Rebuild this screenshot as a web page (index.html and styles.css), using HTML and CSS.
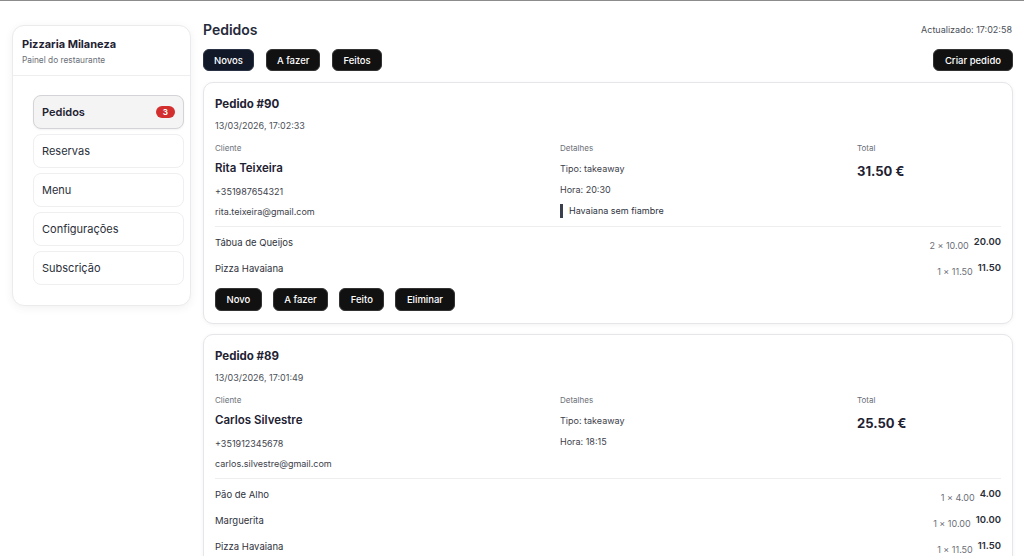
FILE: index.html
```html
<!DOCTYPE html>
<html lang="pt">
<head>
<meta charset="utf-8">
<title>Pedidos</title>
<link rel="stylesheet" href="styles.css">
</head>
<body>
<div class="app">
  <aside class="sidebar">
    <div class="brand">
      <div class="brand-name">Pizzaria Milaneza</div>
      <div class="brand-sub">Painel do restaurante</div>
    </div>
    <nav class="nav">
      <a class="nav-item active">Pedidos <span class="badge">3</span></a>
      <a class="nav-item">Reservas</a>
      <a class="nav-item">Menu</a>
      <a class="nav-item">Configurações</a>
      <a class="nav-item">Subscrição</a>
    </nav>
  </aside>
  <main class="main">
    <div class="topbar">
      <h1 class="page-title">Pedidos</h1>
      <div class="updated">Actualizado: 17:02:58</div>
    </div>
    <div class="toolbar">
      <div class="filters">
        <button class="btn btn-navy">Novos</button>
        <button class="btn">A fazer</button>
        <button class="btn">Feitos</button>
      </div>
      <button class="btn btn-create">Criar pedido</button>
    </div>

    <section class="order">
      <div class="order-title">Pedido #90</div>
      <div class="order-date">13/03/2026, 17:02:33</div>
      <div class="order-grid">
        <div class="col">
          <div class="label">Cliente</div>
          <div class="client-name">Rita Teixeira</div>
          <div class="line">+351987654321</div>
          <div class="line">rita.teixeira@gmail.com</div>
        </div>
        <div class="col">
          <div class="label">Detalhes</div>
          <div class="detail">Tipo: takeaway</div>
          <div class="detail">Hora: 20:30</div>
          <div class="note">Havaiana sem fiambre</div>
        </div>
        <div class="col">
          <div class="label">Total</div>
          <div class="total">31.50 €</div>
        </div>
      </div>
      <div class="items">
        <div class="item"><span class="item-name">Tábua de Queijos</span><span class="item-price"><span class="qty">2 × 10.00</span><span class="sum">20.00</span></span></div>
        <div class="item"><span class="item-name">Pizza Havaiana</span><span class="item-price"><span class="qty">1 × 11.50</span><span class="sum">11.50</span></span></div>
      </div>
      <div class="actions">
        <button class="btn btn-sm">Novo</button>
        <button class="btn btn-sm">A fazer</button>
        <button class="btn btn-sm">Feito</button>
        <button class="btn btn-sm">Eliminar</button>
      </div>
    </section>

    <section class="order">
      <div class="order-title">Pedido #89</div>
      <div class="order-date">13/03/2026, 17:01:49</div>
      <div class="order-grid">
        <div class="col">
          <div class="label">Cliente</div>
          <div class="client-name">Carlos Silvestre</div>
          <div class="line">+351912345678</div>
          <div class="line">carlos.silvestre@gmail.com</div>
        </div>
        <div class="col">
          <div class="label">Detalhes</div>
          <div class="detail">Tipo: takeaway</div>
          <div class="detail">Hora: 18:15</div>
        </div>
        <div class="col">
          <div class="label">Total</div>
          <div class="total">25.50 €</div>
        </div>
      </div>
      <div class="items">
        <div class="item"><span class="item-name">Pão de Alho</span><span class="item-price"><span class="qty">1 × 4.00</span><span class="sum">4.00</span></span></div>
        <div class="item"><span class="item-name">Marguerita</span><span class="item-price"><span class="qty">1 × 10.00</span><span class="sum">10.00</span></span></div>
        <div class="item"><span class="item-name">Pizza Havaiana</span><span class="item-price"><span class="qty">1 × 11.50</span><span class="sum">11.50</span></span></div>
      </div>
      <div class="actions">
        <button class="btn btn-sm">Novo</button>
        <button class="btn btn-sm">A fazer</button>
        <button class="btn btn-sm">Feito</button>
        <button class="btn btn-sm">Eliminar</button>
      </div>
    </section>
  </main>
</div>
</body>
</html>
```

FILE: styles.css
```css
* { box-sizing: border-box; }
html, body { margin: 0; padding: 0; }
body {
  font-family: Inter, "Liberation Sans", sans-serif;
  color: #1f2333;
  background: #fff;
  border-top: 1px solid #8c8c8c;
}
.app {
  display: flex;
  align-items: flex-start;
  gap: 12px;
  padding: 13px 11px 24px 12px;
}
.sidebar {
  width: 179px;
  flex: none;
  margin-top: 11px;
  border: 1px solid #ebebed;
  border-radius: 12px;
  background: #fff;
  box-shadow: 0 2px 10px rgba(0,0,0,0.06);
  padding-bottom: 20px;
}
.brand {
  padding: 10px 9px 9px;
  border-bottom: 1px solid #eeeef0;
}
.brand-name {
  font-size: 11px;
  font-weight: 700;
  line-height: 16px;
  color: #1e2232;
}
.brand-sub {
  font-size: 8.3px;
  line-height: 12px;
  margin-top: 2px;
  color: #6b6f78;
}
.nav {
  display: flex;
  flex-direction: column;
  gap: 5px;
  padding: 19px 6px 0 20px;
}
.nav-item {
  display: flex;
  align-items: center;
  justify-content: space-between;
  height: 34px;
  padding: 0 8px;
  border: 1px solid #efeff1;
  border-radius: 8px;
  font-size: 11px;
  color: #2b2f3a;
}
.nav-item.active {
  background: #f4f4f5;
  border-color: #d4d4d8;
  font-weight: 600;
  color: #1e2232;
  box-shadow: 0 1px 2px rgba(0,0,0,0.05);
}
.badge {
  background: #d32f2f;
  color: #fff;
  font-size: 8px;
  font-weight: 700;
  line-height: 12px;
  padding: 0 7px;
  border-radius: 6px;
}
.main {
  flex: 1;
  min-width: 0;
}
.topbar {
  display: flex;
  align-items: center;
  justify-content: space-between;
  height: 30px;
}
.page-title {
  margin: 0;
  font-size: 14px;
  font-weight: 600;
  color: #262b3b;
}
.updated {
  font-size: 9px;
  color: #4b4f58;
  padding-right: 1px;
}
.toolbar {
  display: flex;
  justify-content: space-between;
  align-items: center;
  margin-top: 5px;
}
.filters { display: flex; gap: 12px; }
.btn {
  font-family: inherit;
  background: #111;
  color: #fff;
  border: 1px solid #333;
  border-radius: 6px;
  height: 22px;
  padding: 0 10px;
  font-size: 9.5px;
  font-weight: 500;
  cursor: pointer;
}
.btn-navy {
  background: #111827;
  border-color: #2a3346;
}
.btn-create { padding: 0 11px; }
.order {
  margin-top: 11px;
  border: 1px solid #e6e6ea;
  border-radius: 10px;
  background: #fff;
  box-shadow: 0 1px 4px rgba(0,0,0,0.05);
  padding: 13px 11px 12px 11px;
}
.order + .order { margin-top: 10px; }
.order-title {
  font-size: 11.5px;
  font-weight: 700;
  line-height: 16px;
  color: #1e2232;
}
.order-date {
  margin-top: 8px;
  font-size: 9px;
  line-height: 12px;
  color: #4b4f58;
}
.order-grid {
  display: grid;
  grid-template-columns: 345fr 297fr 144fr;
  margin-top: 11px;
  padding-bottom: 8px;
  border-bottom: 1px solid #eeeef0;
}
.label {
  font-size: 8px;
  line-height: 11px;
  color: #6b6f78;
}
.client-name {
  margin-top: 6px;
  font-size: 11.5px;
  font-weight: 600;
  line-height: 16px;
  color: #1e2232;
}
.line {
  margin-top: 8px;
  font-size: 9px;
  line-height: 12px;
  color: #3d414b;
}
.client-name + .line { margin-top: 10px; }
.detail {
  margin-top: 9px;
  font-size: 9px;
  line-height: 12px;
  color: #3d414b;
}
.note {
  margin-top: 8px;
  border-left: 3px solid #3a3f4d;
  padding-left: 6px;
  font-size: 9px;
  line-height: 14px;
  color: #2f333d;
}
.total {
  margin-top: 9px;
  font-size: 13px;
  font-weight: 700;
  line-height: 16px;
  color: #1e2232;
}
.items { padding-top: 2px; }
.item {
  display: flex;
  justify-content: space-between;
  align-items: center;
  height: 26px;
  font-size: 9.5px;
  color: #2f333d;
}
.item-price {
  align-self: flex-start;
  margin-top: 7px;
  display: flex;
  align-items: flex-end;
  gap: 5px;
}
.qty {
  font-size: 9px;
  line-height: 12px;
  color: #6b6f78;
}
.sum {
  font-size: 9.5px;
  line-height: 12px;
  margin-bottom: 4px;
  font-weight: 600;
  color: #2a2e38;
}
.actions {
  display: flex;
  gap: 11px;
  margin-top: 7px;
}
.btn-sm {
  height: 23px;
  padding: 0 10.5px;
  border-radius: 6px;
}
```
